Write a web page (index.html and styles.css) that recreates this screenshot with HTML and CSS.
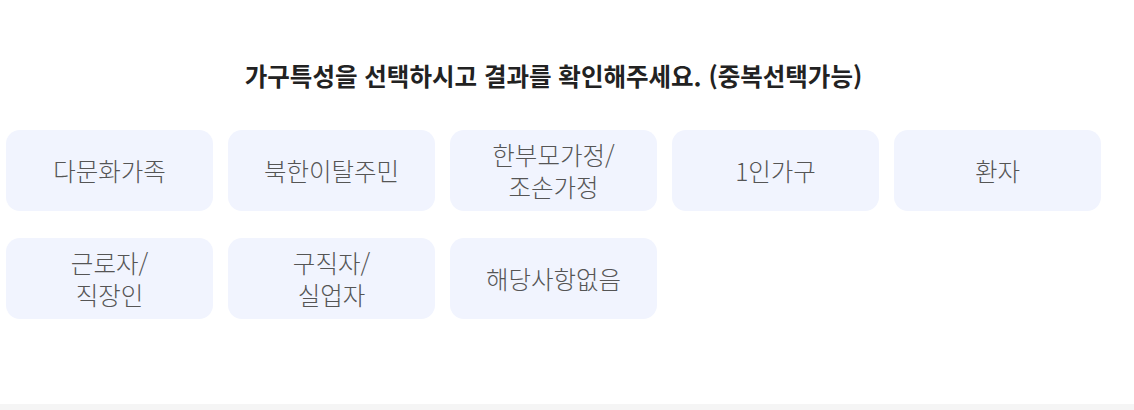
FILE: index.html
```html
<!DOCTYPE html>
<html lang="ko">
<head>
<meta charset="utf-8">
<link rel="stylesheet" href="styles.css">
</head>
<body>
<div class="page">
  <section class="select">
    <h2 class="title">가구특성을 선택하시고 결과를 확인해주세요. (중복선택가능)</h2>
    <div class="grid">
      <button class="opt">다문화가족</button>
      <button class="opt">북한이탈주민</button>
      <button class="opt">한부모가정/<br>조손가정</button>
      <button class="opt">1인가구</button>
      <button class="opt">환자</button>
      <button class="opt">근로자/<br>직장인</button>
      <button class="opt">구직자/<br>실업자</button>
      <button class="opt">해당사항없음</button>
    </div>
  </section>
  <div class="footer-band"></div>
</div>
</body>
</html>
```
FILE: styles.css
```css
* { box-sizing: border-box; }
html, body { margin: 0; padding: 0; background: #fff; }
body { font-family: "Noto Sans CJK KR", "Noto Sans", sans-serif; }
.page { width: 1134px; height: 410px; display: flex; flex-direction: column; }
.select { flex: 1; padding: 58px 0 0 6px; width: 1101px; }
.title {
  margin: 0;
  text-align: center;
  font-size: 24.5px;
  line-height: 36px;
  font-weight: 700;
  color: #222;
}
.grid {
  margin-top: 36px;
  display: grid;
  grid-template-columns: repeat(5, 207px);
  column-gap: 15px;
  row-gap: 27px;
}
.opt {
  height: 81px;
  border: 0;
  border-radius: 14px;
  background: #f1f4fe;
  color: #555;
  font-family: inherit;
  font-size: 24.5px;
  font-weight: 300;
  line-height: 32px;
  padding: 0;
  text-align: center;
}
.footer-band { height: 6px; background: #f5f5f5; }
```
